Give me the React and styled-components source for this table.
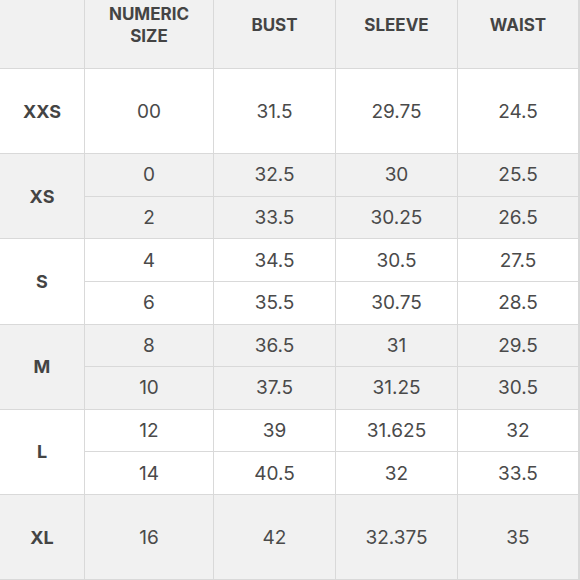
import React from "react";
import styled, { createGlobalStyle } from "styled-components";

const Global = createGlobalStyle`
  html, body {
    margin: 0;
    padding: 0;
    background: #ffffff;
  }
  body {
    font-family: "Inter", "Open Sans", sans-serif;
    color: #454545;
  }
`;

const Chart = styled.div`
  display: grid;
  grid-template-columns: 84px 128px 121px 121px 120px;
  grid-template-rows: 68px 84px repeat(8, 41.625px) 84px;
  gap: 1px;
  width: 580px;
  height: 580px;
  box-sizing: border-box;
  padding: 0 1px 1px 0;
  background: #d9d9d9;
  overflow: hidden;
`;

const Head = styled.div`
  display: flex;
  align-items: center;
  justify-content: center;
  text-align: center;
  padding-bottom: 18px;
  background: #f1f1f1;
  font-weight: 700;
  font-size: 17px;
  line-height: 22px;
  color: #444;
  text-transform: uppercase;
`;

const Cell = styled.div`
  display: flex;
  align-items: center;
  justify-content: center;
  background: ${(p) => (p.$shade ? "#f1f1f1" : "#ffffff")};
  font-size: 19px;
  color: #4a4a4a;
  ${(p) => (p.$span ? `grid-row: span ${p.$span};` : "")}
`;

const Label = styled(Cell)`
  font-weight: 700;
  font-size: 18px;
  color: #444;
`;

const groups = [
  { size: "XXS", rows: [["00", "31.5", "29.75", "24.5"]] },
  { size: "XS", rows: [["0", "32.5", "30", "25.5"], ["2", "33.5", "30.25", "26.5"]] },
  { size: "S", rows: [["4", "34.5", "30.5", "27.5"], ["6", "35.5", "30.75", "28.5"]] },
  { size: "M", rows: [["8", "36.5", "31", "29.5"], ["10", "37.5", "31.25", "30.5"]] },
  { size: "L", rows: [["12", "39", "31.625", "32"], ["14", "40.5", "32", "33.5"]] },
  { size: "XL", rows: [["16", "42", "32.375", "35"]] },
];

export default function App() {
  return (
    <>
      <Global />
      <Chart>
        <Head />
        <Head>
          Numeric
          <br />
          Size
        </Head>
        <Head>Bust</Head>
        <Head>Sleeve</Head>
        <Head>Waist</Head>
        {groups.map((g, gi) => {
          const shade = gi % 2 === 1;
          return (
            <React.Fragment key={g.size}>
              <Label $shade={shade} $span={g.rows.length}>
                {g.size}
              </Label>
              {g.rows.map((r) =>
                r.map((v, i) => (
                  <Cell key={g.size + r[0] + i} $shade={shade}>
                    {v}
                  </Cell>
                ))
              )}
            </React.Fragment>
          );
        })}
      </Chart>
    </>
  );
}
